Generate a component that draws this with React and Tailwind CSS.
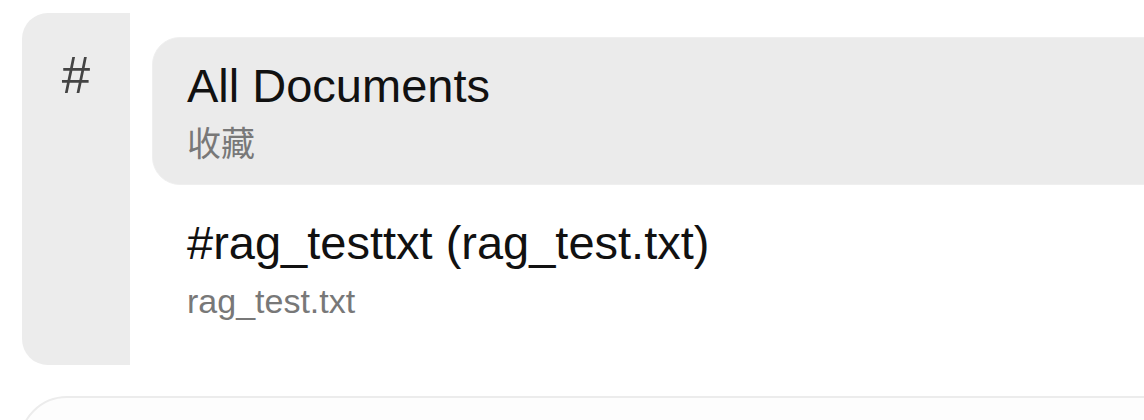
export default function App() {
  const items = [
    { title: "All Documents", sub: "收藏", active: true },
    { title: "#rag_testtxt (rag_test.txt)", sub: "rag_test.txt", active: false },
  ];
  return (
    <div className="w-[1144px] h-[420px] overflow-hidden bg-white font-['Liberation_Sans','Noto_Sans_CJK_SC',sans-serif]">
      <div className="w-[1500px] pl-[22px] pt-[13px]">
        <div className="flex">
          <div className="w-[108px] shrink-0 bg-[#ececec] rounded-l-[26px] flex justify-center pt-[38px] text-[51px] leading-[50px] text-[#444444]">
            #
          </div>
          <div className="flex-1 pl-[22px] pt-[24px] pb-[23px] flex flex-col gap-[9px]">
            {items.map((it) => (
              <div
                key={it.title}
                className={
                  it.active
                    ? "h-[148px] rounded-[28px] bg-[#ebebeb] border border-[#efefef] pl-[34px] pt-[20px]"
                    : "h-[148px] rounded-[28px] pl-[35px] pt-[21px]"
                }
              >
                <div className="text-[47px] leading-[56px] text-[#111111]">{it.title}</div>
                <div className="mt-[8px] text-[34px] leading-[44px] text-[#787878]">{it.sub}</div>
              </div>
            ))}
          </div>
        </div>
        <div className="mt-[31px] -ml-[3px] h-[120px] rounded-[48px] border-2 border-[#ececec] bg-[#fdfdfd]"></div>
      </div>
    </div>
  );
}
